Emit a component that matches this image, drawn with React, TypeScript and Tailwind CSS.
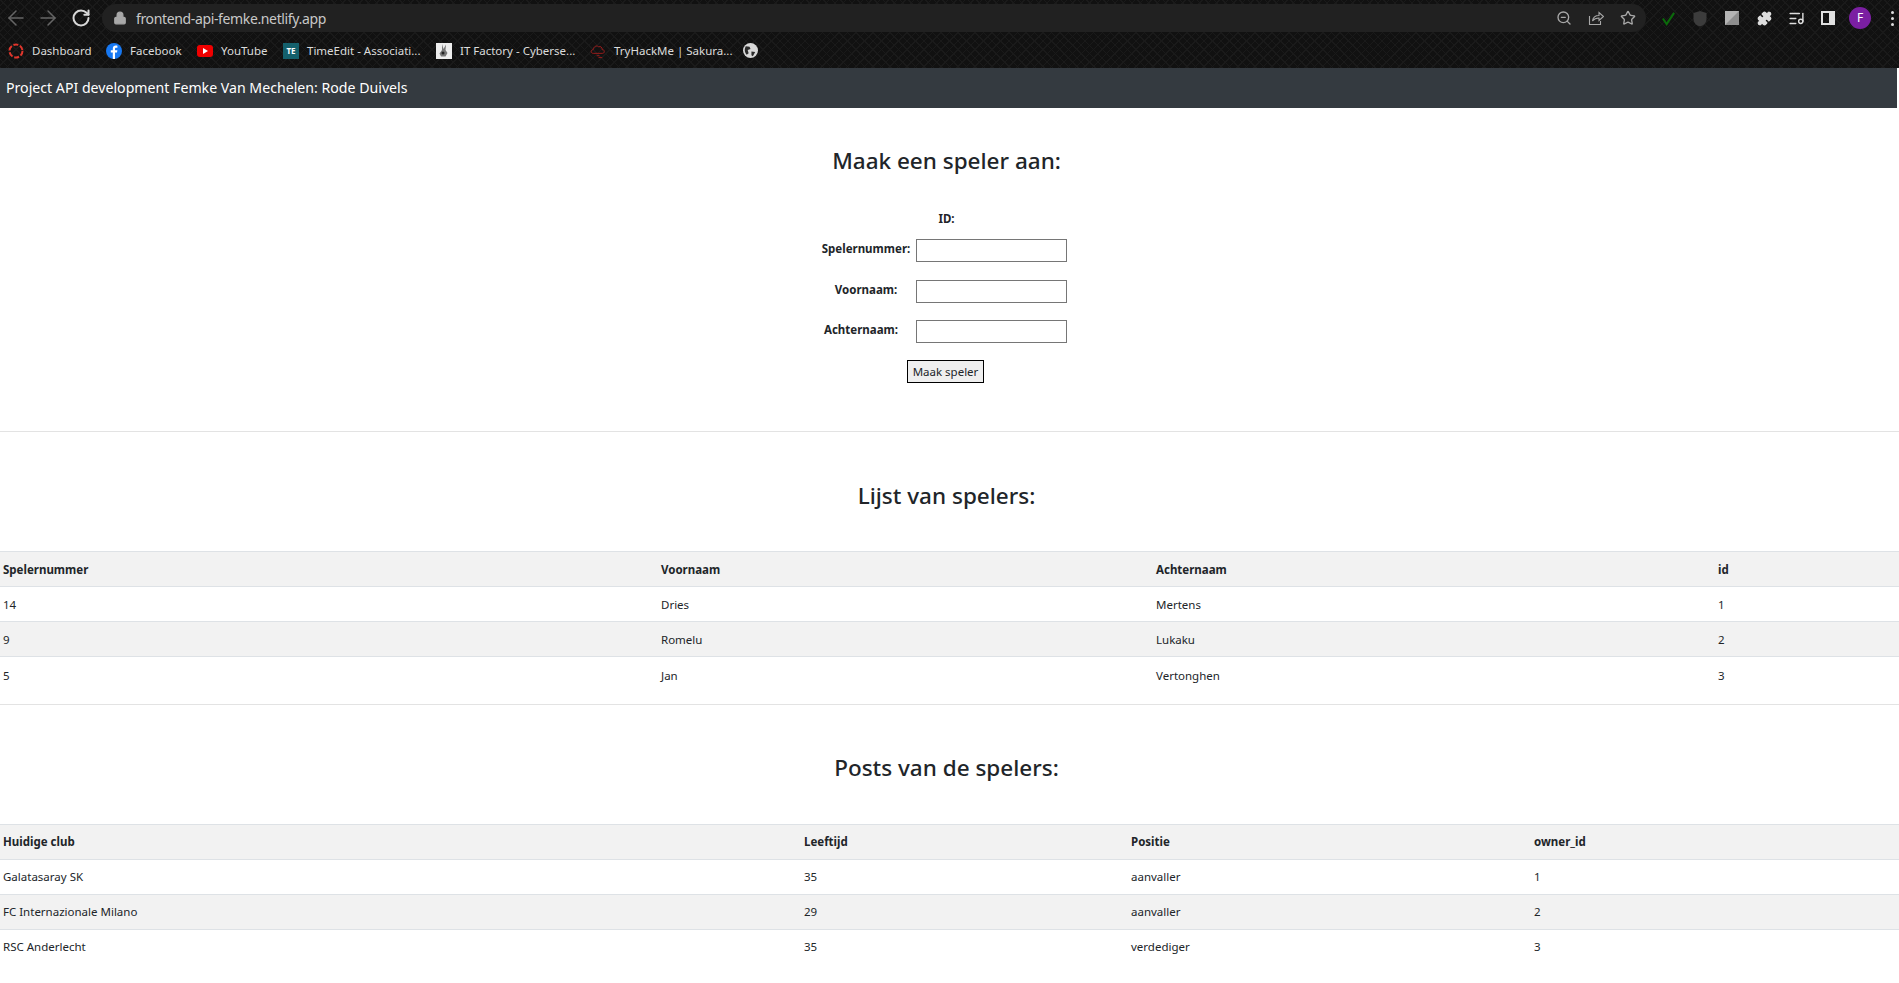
import { ArrowLeft, ArrowRight, RotateCw, Lock, ZoomOut, Star, Puzzle, ListMusic } from "lucide-react";

const font = "font-['Noto_Sans','Liberation_Sans',sans-serif]";

function Bookmark({ icon, label, w }: { icon: React.ReactNode; label: string; w: string }) {
  return (
    <div className={`flex items-center gap-[8px] shrink-0 ${w}`}>
      <span className="w-[16px] h-[16px] shrink-0 flex items-center justify-center">{icon}</span>
      <span className="text-[11.5px] text-[#dcdcdc] whitespace-nowrap">{label}</span>
    </div>
  );
}

function Ext({ children }: { children: React.ReactNode }) {
  return <div className="w-[32px] flex items-center justify-center shrink-0">{children}</div>;
}

function ChromeBar() {
  return (
    <div className="h-[68px] bg-[#111111] bg-[repeating-linear-gradient(45deg,#1a1a1a_0,#1a1a1a_1px,transparent_1px,transparent_6px),repeating-linear-gradient(-45deg,#1a1a1a_0,#1a1a1a_1px,transparent_1px,transparent_6px)] flex flex-col">
      <div className="h-[36px] flex items-center">
        <div className="w-[102px] pl-[4px] flex items-center gap-[8px] shrink-0">
          <ArrowLeft size={24} strokeWidth={1.5} className="text-[#666666]" />
          <ArrowRight size={24} strokeWidth={1.5} className="text-[#666666]" />
          <RotateCw size={20} strokeWidth={2.4} className="text-[#d8d8d8] ml-[3px]" />
        </div>
        <div className="w-[1544px] h-[28px] rounded-full bg-[#212121] flex items-center pl-[11px] pr-[10px] shrink-0">
          <Lock size={14} className="text-[#a8a8a8] fill-[#a8a8a8]" />
          <span className="ml-[9px] text-[14px] text-[#c8c8c8] tracking-[-0.36px]">frontend-api-femke.netlify.app</span>
          <div className="ml-auto flex items-center gap-[16px] text-[#a8a8a8]">
            <ZoomOut size={16} />
            <svg width="16" height="16" viewBox="0 0 16 16" fill="none" stroke="currentColor" strokeWidth="1.1">
              <path d="M1.5 6v8.5h11V11" />
              <path d="M4.5 11c.5-3.5 3-5.500 6.500-5.500V2.500l4.500 4-4.500 4V8C8.500 8 6 9 4.500 11z" />
            </svg>
            <Star size={16} />
          </div>
        </div>
        <div className="flex items-center ml-[6px] shrink-0">
          <Ext><svg width="15" height="15" viewBox="0 0 16 16" fill="none"><path d="M2 8l4 6L14 2" stroke="#0b6a0b" strokeWidth="2.200" /></svg></Ext>
          <Ext><svg width="16" height="17" viewBox="0 0 16 17"><path d="M8 1l6.500 2v6c0 4-3 6.500-6.500 7.500C4.500 15.500 1.500 13 1.500 9V3z" fill="#3c3c3c" /></svg></Ext>
          <Ext><svg width="14" height="14" viewBox="0 0 14 14"><rect width="14" height="14" fill="#8e8e8e" /><path d="M0 14L14 0H0z" fill="#b4b4b4" /></svg></Ext>
          <Ext><Puzzle size={15} className="text-[#dedede] fill-[#dedede]" /></Ext>
          <Ext><ListMusic size={17} className="text-[#dedede]" /></Ext>
          <Ext><svg width="14" height="14" viewBox="0 0 14 14"><path fillRule="evenodd" d="M0 0h14v14H0zM2 2v10h6V2z" fill="#e0e0e0" /></svg></Ext>
          <Ext><div className="w-[22px] h-[22px] rounded-full bg-[#7b1fa2] text-white text-[12px] flex items-center justify-center">F</div></Ext>
          <Ext>
            <div className="flex flex-col gap-[3px]">
              <span className="w-[3px] h-[3px] rounded-full bg-[#dedede]" />
              <span className="w-[3px] h-[3px] rounded-full bg-[#dedede]" />
              <span className="w-[3px] h-[3px] rounded-full bg-[#dedede]" />
            </div>
          </Ext>
        </div>
      </div>
      <div className="h-[29px] flex items-center pl-[8px]">
        <Bookmark w="w-[98px]" label="Dashboard" icon={<svg width="16" height="16" viewBox="0 0 16 16" fill="none"><circle cx="8" cy="8" r="6.500" stroke="#e0362c" strokeWidth="2" strokeDasharray="5 1.800" /></svg>} />
        <Bookmark w="w-[91px]" label="Facebook" icon={<svg width="16" height="16" viewBox="0 0 16 16"><circle cx="8" cy="8" r="8" fill="#1778f2" /><path d="M9 16V9.500h2l.4-2.300H9V6c0-.8.300-1.200 1.200-1.200h1.200V2.800C11 2.700 10.400 2.600 9.800 2.600 8 2.600 6.800 3.700 6.800 5.700v1.500H4.800v2.300h2V16z" fill="#ffffff" /></svg>} />
        <Bookmark w="w-[86px]" label="YouTube" icon={<span className="w-[16px] h-[12px] rounded-[3px] bg-[#f00000] flex items-center justify-center"><span className="border-l-[5px] border-l-white border-y-[3px] border-y-transparent" /></span>} />
        <Bookmark w="w-[153px]" label="TimeEdit - Associati..." icon={<span className="w-[16px] h-[16px] bg-[#14606c] text-white text-[8px] font-bold flex items-center justify-center">TE</span>} />
        <Bookmark w="w-[154px]" label="IT Factory - Cyberse..." icon={<svg width="16" height="16" viewBox="0 0 16 16"><rect width="16" height="16" fill="#eeeeee" /><path d="M6 1l1.500 5L10 1.500 9.500 7l2 3-2 3.500H5l-1.500-3L6 7z" fill="#777777" /><circle cx="7" cy="10" r="1.500" fill="#222222" /></svg>} />
        <Bookmark w="w-[153px]" label="TryHackMe | Sakura..." icon={<svg width="17" height="16" viewBox="0 0 17 16" fill="none" stroke="#a01c1c"><path d="M3.500 10.500c-3 0-3-4 0-4 0-3 3.500-5 5.500-3 2-1 4 .5 4 3 3 0 3 4 0 4z" /><path d="M7 13h3M9 15h4" /></svg>} />
        <svg width="15" height="15" viewBox="0 0 16 16"><circle cx="8" cy="8" r="8" fill="#d8d8d8" /><path d="M3 3.500l4 .5 1 2.500-3 1 1 3.500-2 1.500C2 10.500 1 7 3 3.500zM9 9l4 .5-2.500 4.500L9 13z" fill="#2a2a2a" /></svg>
      </div>
    </div>
  );
}

function DataTable({ cols, head, rows, pad }: { cols: string[]; head: string[]; rows: string[][]; pad: string }) {
  return (
    <table className="w-full table-fixed border-collapse text-[11.5px] text-[#212529]">
      <colgroup>
        {cols.map((c, i) => (
          <col key={i} className={c} />
        ))}
      </colgroup>
      <thead>
        <tr className="bg-[#f2f2f2] border-y border-[#dee2e6] h-[35px]">
          {head.map((h) => (
            <th key={h} className={`text-left font-bold px-[3px] py-0 ${pad}`}>{h}</th>
          ))}
        </tr>
      </thead>
      <tbody>
        {rows.map((r, i) => (
          <tr key={i} className={`h-[35px] border-b border-[#dee2e6] last:border-b-0 ${i % 2 === 1 ? "bg-[#f2f2f2]" : "bg-white"}`}>
            {r.map((c, j) => (
              <td key={j} className={`px-[3px] py-0 ${pad}`}>{c}</td>
            ))}
          </tr>
        ))}
      </tbody>
    </table>
  );
}

function Field({ label, pr }: { label: string; pr: string }) {
  return (
    <div className="grid grid-cols-[97px_151px] items-center">
      <label className={`text-center font-bold text-[11.5px] pb-[3px] ${pr}`}>{label}</label>
      <input className="h-[23px] w-[151px] border border-[#767676] bg-white" />
    </div>
  );
}

export default function App() {
  return (
    <div className={`${font} h-[983px] overflow-hidden bg-white text-[#212529]`}>
      <ChromeBar />
      <div className="h-[40px] bg-[#343a40] text-white text-[14.15px] flex items-center pl-[6px] mr-[2px]">
        Project API development Femke Van Mechelen: Rode Duivels
      </div>
      <div className="h-[324px] border-b border-[#e3e3e3] flex flex-col items-center pt-[36px] pr-[6px]">
        <h2 className="text-[22.5px] leading-[34px] font-medium">Maak een speler aan:</h2>
        <form className="mt-[32px] flex flex-col items-center text-[11.5px]">
          <div className="font-bold h-[18px] leading-[18px]">ID:</div>
          <div className="mt-[11px] mr-[8px] flex flex-col gap-[17.5px]">
            <Field label="Spelernummer:" pr="pr-[2px]" />
            <Field label="Voornaam:" pr="pr-[2px]" />
            <Field label="Achternaam:" pr="pr-[12px]" />
          </div>
          <button type="button" className="mt-[17px] mr-[2px] h-[23px] w-[77px] border border-black bg-[#efefef] text-[11.5px]">Maak speler</button>
        </form>
      </div>
      <div className="h-[119px] pt-[8px] flex items-center justify-center pr-[6px]">
        <h2 className="text-[22.5px] font-medium">Lijst van spelers:</h2>
      </div>
      <DataTable
        pad="pt-[2px]"
        cols={["w-[658px]", "w-[495px]", "w-[562px]", "w-auto"]}
        head={["Spelernummer", "Voornaam", "Achternaam", "id"]}
        rows={[
          ["14", "Dries", "Mertens", "1"],
          ["9", "Romelu", "Lukaku", "2"],
          ["5", "Jan", "Vertonghen", "3"],
        ]}
      />
      <div className="mt-[12px] h-[120px] pt-[8px] border-t border-[#e3e3e3] flex items-center justify-center pr-[6px]">
        <h2 className="text-[22.5px] font-medium">Posts van de spelers:</h2>
      </div>
      <DataTable
        pad=""
        cols={["w-[801px]", "w-[327px]", "w-[403px]", "w-auto"]}
        head={["Huidige club", "Leeftijd", "Positie", "owner_id"]}
        rows={[
          ["Galatasaray SK", "35", "aanvaller", "1"],
          ["FC Internazionale Milano", "29", "aanvaller", "2"],
          ["RSC Anderlecht", "35", "verdediger", "3"],
        ]}
      />
    </div>
  );
}
